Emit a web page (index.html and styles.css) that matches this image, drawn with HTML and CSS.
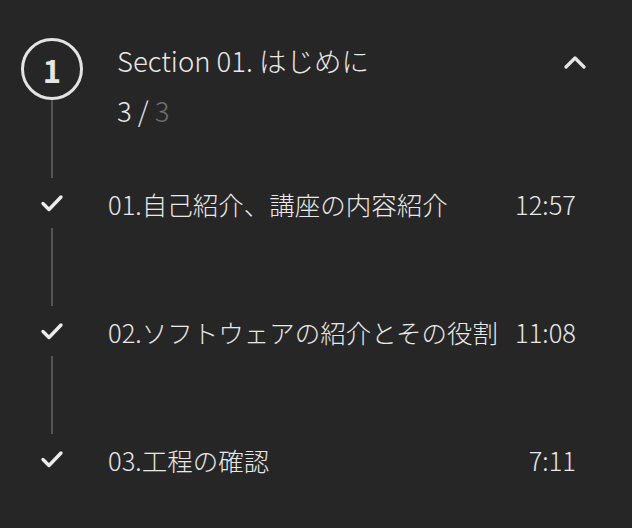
FILE: index.html
```html
<!DOCTYPE html>
<html lang="ja">
<head>
    <meta charset="UTF-8">
    <meta name="viewport" content="width=device-width, initial-scale=1.0">
    <title>Section 01</title>
    <link rel="stylesheet" href="styles.css">
</head>
<body>

    <!-- セクション見出し -->
    <div class="section">
        <div class="section-head">
            <div class="rail rail-head">
                <div class="step">1</div>
                <div class="connector"></div>
            </div>
            <div class="head-text">
                <div class="section-title">Section 01. はじめに</div>
                <div class="progress">3 / <span class="total">3</span></div>
            </div>
            <svg class="chevron" width="22" height="14" viewBox="0 0 22 14">
                <path d="M2 12 L11 3 L20 12" fill="none" stroke="#e6e6e6" stroke-width="3.2" stroke-linecap="round" stroke-linejoin="round"/>
            </svg>
        </div>

        <!-- レッスン一覧 -->
        <div class="lesson">
            <div class="lesson-row">
                <div class="rail">
                    <svg class="check" width="24" height="20" viewBox="0 0 24 20">
                        <path d="M3 10.5 L9 16.5 L21 4" fill="none" stroke="#ececec" stroke-width="3.4" stroke-linecap="round" stroke-linejoin="round"/>
                    </svg>
                </div>
                <div class="lesson-title">01.自己紹介、講座の内容紹介</div>
                <div class="lesson-time">12:57</div>
            </div>
            <div class="connector"></div>
        </div>

        <div class="lesson">
            <div class="lesson-row">
                <div class="rail">
                    <svg class="check" width="24" height="20" viewBox="0 0 24 20">
                        <path d="M3 10.5 L9 16.5 L21 4" fill="none" stroke="#ececec" stroke-width="3.4" stroke-linecap="round" stroke-linejoin="round"/>
                    </svg>
                </div>
                <div class="lesson-title">02.ソフトウェアの紹介とその役割</div>
                <div class="lesson-time">11:08</div>
            </div>
            <div class="connector"></div>
        </div>

        <div class="lesson">
            <div class="lesson-row">
                <div class="rail">
                    <svg class="check" width="24" height="20" viewBox="0 0 24 20">
                        <path d="M3 10.5 L9 16.5 L21 4" fill="none" stroke="#ececec" stroke-width="3.4" stroke-linecap="round" stroke-linejoin="round"/>
                    </svg>
                </div>
                <div class="lesson-title">03.工程の確認</div>
                <div class="lesson-time">7:11</div>
            </div>
        </div>
    </div>

</body>
</html>
```

FILE: styles.css
```css
body {
    margin: 0;
    padding: 0;
    background-color: #262626;
    color: #e8e8e8;
    font-family: "Noto Sans CJK JP", "Noto Sans", sans-serif;
    font-weight: 300;
    height: 528px;
    overflow: hidden;
}

.section {
    padding: 38px 46px 0 21px;
}

.section-head {
    display: flex;
    align-items: flex-start;
}

.rail {
    width: 62px;
    flex-shrink: 0;
    display: flex;
    justify-content: center;
}

.rail-head {
    flex-direction: column;
    align-items: center;
}

.step {
    width: 56px;
    height: 56px;
    border: 3px solid #e3e3e3;
    border-radius: 50%;
    display: flex;
    align-items: center;
    justify-content: center;
    font-size: 31px;
    font-weight: bold;
    line-height: 1;
    color: #e6e6e6;
}

.head-text {
    flex: 1;
    margin-left: 34px;
    margin-top: 2px;
}

.section-title {
    font-size: 27.5px;
    line-height: 40px;
}

.progress {
    font-size: 27.5px;
    line-height: 40px;
    margin-top: 10px;
}

.progress .total {
    color: #6e6e6e;
}

.chevron {
    margin-top: 17px;
}

.connector {
    width: 2px;
    height: 78px;
    margin-left: 30px;
    background: #555;
}

.rail-head .connector {
    margin-left: 0;
}

.lesson-row {
    display: flex;
    align-items: center;
    height: 50px;
    padding-right: 10px;
}

.check {
    display: block;
}

.lesson-title {
    flex: 1;
    margin-left: 25px;
    font-size: 25.5px;
    white-space: nowrap;
}

.lesson-time {
    font-size: 25.5px;
}
```
